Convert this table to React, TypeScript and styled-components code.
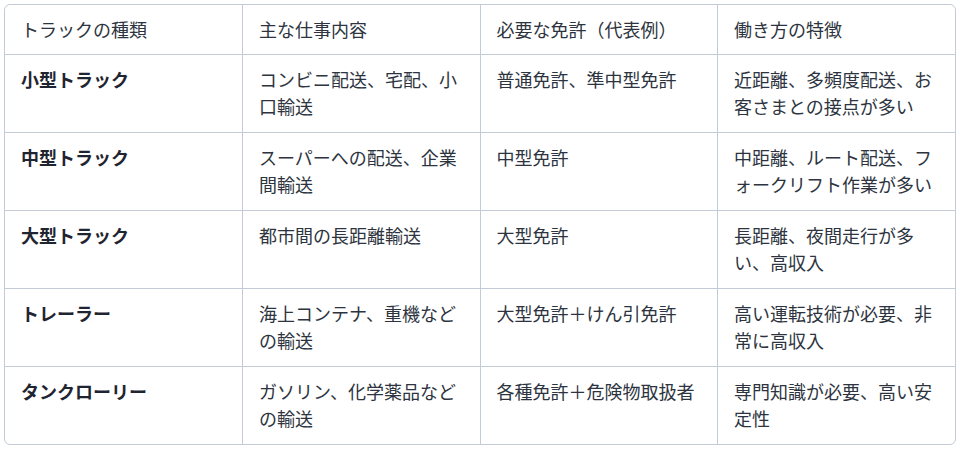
import React from 'react';
import styled, { createGlobalStyle } from 'styled-components';

interface TruckRow {
  type: string;
  work: string;
  license: string;
  feature: string;
}

const rows: TruckRow[] = [
  {
    type: '小型トラック',
    work: 'コンビニ配送、宅配、小口輸送',
    license: '普通免許、準中型免許',
    feature: '近距離、多頻度配送、お客さまとの接点が多い',
  },
  {
    type: '中型トラック',
    work: 'スーパーへの配送、企業間輸送',
    license: '中型免許',
    feature: '中距離、ルート配送、フォークリフト作業が多い',
  },
  {
    type: '大型トラック',
    work: '都市間の長距離輸送',
    license: '大型免許',
    feature: '長距離、夜間走行が多い、高収入',
  },
  {
    type: 'トレーラー',
    work: '海上コンテナ、重機などの輸送',
    license: '大型免許＋けん引免許',
    feature: '高い運転技術が必要、非常に高収入',
  },
  {
    type: 'タンクローリー',
    work: 'ガソリン、化学薬品などの輸送',
    license: '各種免許＋危険物取扱者',
    feature: '専門知識が必要、高い安定性',
  },
];

const GlobalStyle = createGlobalStyle`
  body {
    margin: 0;
    background: #ffffff;
    font-family: "Noto Sans CJK JP", "Noto Sans", sans-serif;
  }
`;

const TableWrapper = styled.div`
  margin: 4px;
  border: 1px solid #c3ccd6;
  border-radius: 6px;
  overflow: hidden;
  background: #ffffff;
`;

const Cell = styled.td<{ $bold?: boolean }>`
  border: 1px solid #c3ccd6;
  padding: 11px 16px 12px;
  vertical-align: top;
  text-align: left;
  font-weight: ${(p) => (p.$bold ? 700 : 400)};
  color: ${(p) => (p.$bold ? '#1f2530' : '#2d3440')};

  &:first-child {
    border-left: none;
  }
  &:last-child {
    border-right: none;
  }
`;

const HeadCell = styled(Cell).attrs({ as: 'th' })`
  font-weight: 400;
  border-top: none;
  padding-bottom: 11px;
`;

const Table = styled.table`
  width: 100%;
  border-collapse: collapse;
  table-layout: fixed;
  color: #2d3440;
  font-size: 18px;
  line-height: 27px;

  tbody tr:last-child ${Cell} {
    border-bottom: none;
  }
`;

const App: React.FC = () => {
  return (
    <>
      <GlobalStyle />
      <TableWrapper>
        <Table>
          <thead>
            <tr>
              <HeadCell>トラックの種類</HeadCell>
              <HeadCell>主な仕事内容</HeadCell>
              <HeadCell>必要な免許（代表例）</HeadCell>
              <HeadCell>働き方の特徴</HeadCell>
            </tr>
          </thead>
          <tbody>
            {rows.map((row) => (
              <tr key={row.type}>
                <Cell $bold>{row.type}</Cell>
                <Cell>{row.work}</Cell>
                <Cell>{row.license}</Cell>
                <Cell>{row.feature}</Cell>
              </tr>
            ))}
          </tbody>
        </Table>
      </TableWrapper>
    </>
  );
};

export default App;
